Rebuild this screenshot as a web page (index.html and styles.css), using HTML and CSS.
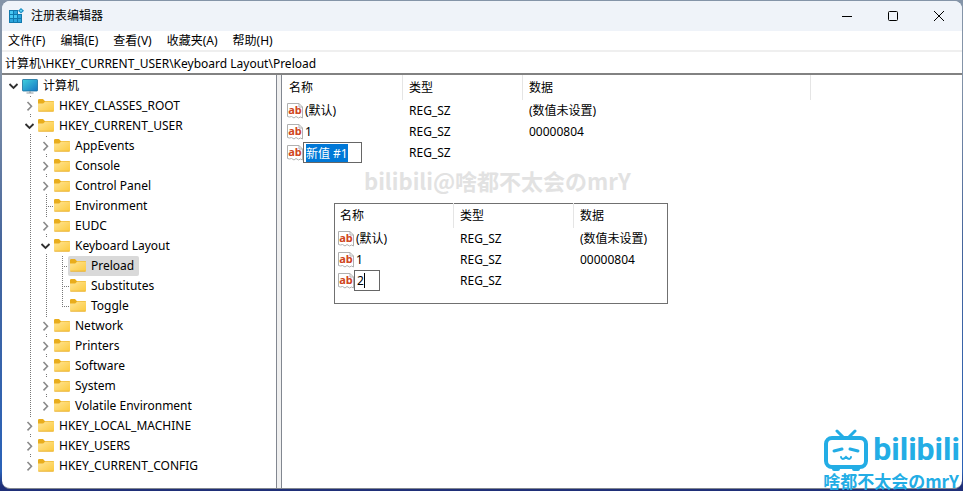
FILE: index.html
```html
<!DOCTYPE html>
<html lang="zh-CN">
<head>
    <meta charset="UTF-8">
    <meta name="viewport" content="width=device-width, initial-scale=1.0">
    <title>注册表编辑器</title>
    <link rel="stylesheet" href="styles.css">
</head>
<body>
    <!-- Shared icons -->
    <svg class="sprite" aria-hidden="true">
        <defs>
            <linearGradient id="folder-fill" x1="0" y1="0" x2="1" y2="1">
                <stop offset="0" stop-color="#ffe596"/>
                <stop offset="1" stop-color="#fcca3e"/>
            </linearGradient>
            <linearGradient id="screen-fill" x1="0" y1="0" x2="1" y2="1">
                <stop offset="0" stop-color="#3fd0dd"/>
                <stop offset="1" stop-color="#1676c4"/>
            </linearGradient>
        </defs>
        <symbol id="folder" viewBox="0 0 16 16">
            <path d="M0 2.2Q0 1 1.2 1H5l1.8 2H15q1 0 1 1v4H0z" fill="#e9ad1c"/>
            <path d="M0 5.4h5.2l2-2h8q.8 0 .8.8V12.500q0 1-1 1H1q-1 0-1-1z" fill="url(#folder-fill)"/>
            <path d="M.4 13.200h15.2" stroke="#e5aa2c" stroke-width=".8"/>
        </symbol>
        <symbol id="computer" viewBox="0 0 16 16">
            <rect x=".5" y="1.5" width="15" height="11.500" rx=".6" fill="url(#screen-fill)" stroke="#1a6f9c" stroke-width=".8"/>
            <path d="M8 13v2M4.5 15h7" stroke="#8f9ba3" stroke-width="1.2"/>
        </symbol>
        <symbol id="closed" viewBox="0 0 16 16">
            <path d="M6.500 4l4 4.200-4 4.200" fill="none" stroke="#8a8a8a" stroke-width="1.6"/>
        </symbol>
        <symbol id="open" viewBox="0 0 16 16">
            <path d="M4.500 6l4 4 4-4" fill="none" stroke="#303030" stroke-width="1.8"/>
        </symbol>
        <symbol id="string" viewBox="0 0 16 16">
            <path d="M.5 .5h11.500l3.500 3.500v11l-2-1-2 1-2.500-1.500-2 1.500-2.500-1.500-2 .5-2-.5z" fill="#fff" stroke="#b0b0b0"/>
            <path d="M12 .5V4h3.500" fill="none" stroke="#b0b0b0"/>
        </symbol>
    </svg>

    <div class="window">
        <header class="title-bar">
            <svg class="app-icon" viewBox="0 0 16 16">
                <rect x="1" y="2" width="13" height="13" fill="#1279ad"/>
                <path d="M2 3h3v3H2zM2 7h3v3H2zM6 7h3v3H6z" fill="#48c8f2"/>
                <path d="M6 3h3v3H6zM2 11h3v3H2zM6 11h3v3H6zM10 7h3v3h-3zM10 11h3v3h-3z" fill="#2ba4dc"/>
                <path d="M10 2h4v4h-4z" fill="#eff3f9"/>
                <path d="M13 0l3 2.700-3 2.700-3-2.700z" fill="#1c8fc4"/>
                <path d="M13 1.500l1.300 1.200L13 4l-1.300-1.300z" fill="#6fdcfa"/>
            </svg>
            <h1>注册表编辑器</h1>
            <div class="window-controls">
                <button aria-label="最小化"><svg viewBox="0 0 12 12"><path d="M1 6.500h10"/></svg></button>
                <button aria-label="最大化"><svg viewBox="0 0 12 12"><rect x="1.500" y="1.500" width="9" height="9" rx="1"/></svg></button>
                <button aria-label="关闭"><svg viewBox="0 0 12 12"><path d="M1 1l10 10M11 1L1 11"/></svg></button>
            </div>
        </header>

        <nav class="menu-bar">
            <button>文件(F)</button>
            <button>编辑(E)</button>
            <button>查看(V)</button>
            <button>收藏夹(A)</button>
            <button>帮助(H)</button>
        </nav>

        <input class="address-bar" type="text" aria-label="地址" value="计算机\HKEY_CURRENT_USER\Keyboard Layout\Preload">

        <main class="panes">
            <ul class="tree" id="tree">
                <li>
                    <div class="node"><svg class="toggle"><use href="#open"/></svg><span class="key"><svg class="icon"><use href="#computer"/></svg>计算机</span></div>
                    <ul>
                        <li><div class="node"><svg class="toggle"><use href="#closed"/></svg><span class="key"><svg class="icon"><use href="#folder"/></svg>HKEY_CLASSES_ROOT</span></div></li>
                        <li>
                            <div class="node"><svg class="toggle"><use href="#open"/></svg><span class="key"><svg class="icon"><use href="#folder"/></svg>HKEY_CURRENT_USER</span></div>
                            <ul>
                                <li><div class="node"><svg class="toggle"><use href="#closed"/></svg><span class="key"><svg class="icon"><use href="#folder"/></svg>AppEvents</span></div></li>
                                <li><div class="node"><svg class="toggle"><use href="#closed"/></svg><span class="key"><svg class="icon"><use href="#folder"/></svg>Console</span></div></li>
                                <li><div class="node"><svg class="toggle"><use href="#closed"/></svg><span class="key"><svg class="icon"><use href="#folder"/></svg>Control Panel</span></div></li>
                                <li><div class="node"><span class="branch"></span><span class="key"><svg class="icon"><use href="#folder"/></svg>Environment</span></div></li>
                                <li><div class="node"><svg class="toggle"><use href="#closed"/></svg><span class="key"><svg class="icon"><use href="#folder"/></svg>EUDC</span></div></li>
                                <li>
                                    <div class="node"><svg class="toggle"><use href="#open"/></svg><span class="key"><svg class="icon"><use href="#folder"/></svg>Keyboard Layout</span></div>
                                    <ul>
                                        <li><div class="node"><span class="branch"></span><span class="key selected"><svg class="icon"><use href="#folder"/></svg>Preload</span></div></li>
                                        <li><div class="node"><span class="branch"></span><span class="key"><svg class="icon"><use href="#folder"/></svg>Substitutes</span></div></li>
                                        <li><div class="node"><span class="branch"></span><span class="key"><svg class="icon"><use href="#folder"/></svg>Toggle</span></div></li>
                                    </ul>
                                </li>
                                <li><div class="node"><svg class="toggle"><use href="#closed"/></svg><span class="key"><svg class="icon"><use href="#folder"/></svg>Network</span></div></li>
                                <li><div class="node"><svg class="toggle"><use href="#closed"/></svg><span class="key"><svg class="icon"><use href="#folder"/></svg>Printers</span></div></li>
                                <li><div class="node"><svg class="toggle"><use href="#closed"/></svg><span class="key"><svg class="icon"><use href="#folder"/></svg>Software</span></div></li>
                                <li><div class="node"><svg class="toggle"><use href="#closed"/></svg><span class="key"><svg class="icon"><use href="#folder"/></svg>System</span></div></li>
                                <li><div class="node"><svg class="toggle"><use href="#closed"/></svg><span class="key"><svg class="icon"><use href="#folder"/></svg>Volatile Environment</span></div></li>
                            </ul>
                        </li>
                        <li><div class="node"><svg class="toggle"><use href="#closed"/></svg><span class="key"><svg class="icon"><use href="#folder"/></svg>HKEY_LOCAL_MACHINE</span></div></li>
                        <li><div class="node"><svg class="toggle"><use href="#closed"/></svg><span class="key"><svg class="icon"><use href="#folder"/></svg>HKEY_USERS</span></div></li>
                        <li><div class="node"><svg class="toggle"><use href="#closed"/></svg><span class="key"><svg class="icon"><use href="#folder"/></svg>HKEY_CURRENT_CONFIG</span></div></li>
                    </ul>
                </li>
            </ul>

            <section class="values">
                <table class="value-list">
                    <thead>
                        <tr><th class="col-name">名称</th><th class="col-type">类型</th><th class="col-data">数据</th></tr>
                    </thead>
                    <tbody>
                        <tr><td><div class="name"><span class="string-icon"><svg class="icon"><use href="#string"/></svg><b>ab</b></span><span>(默认)</span></div></td><td>REG_SZ</td><td>(数值未设置)</td></tr>
                        <tr><td><div class="name"><span class="string-icon"><svg class="icon"><use href="#string"/></svg><b>ab</b></span><span>1</span></div></td><td>REG_SZ</td><td>00000804</td></tr>
                        <tr><td><div class="name"><span class="string-icon"><svg class="icon"><use href="#string"/></svg><b>ab</b></span><input class="rename" id="new-value" type="text" aria-label="名称" value="新值 #1"></div></td><td>REG_SZ</td><td></td></tr>
                    </tbody>
                </table>

                <p class="watermark">bilibili@啥都不太会のmrY</p>

                <div class="inset">
                    <table class="value-list">
                        <thead>
                            <tr><th class="col-name">名称</th><th class="col-type">类型</th><th>数据</th></tr>
                        </thead>
                        <tbody>
                            <tr><td><div class="name"><span class="string-icon"><svg class="icon"><use href="#string"/></svg><b>ab</b></span><span>(默认)</span></div></td><td>REG_SZ</td><td>(数值未设置)</td></tr>
                            <tr><td><div class="name"><span class="string-icon"><svg class="icon"><use href="#string"/></svg><b>ab</b></span><span>1</span></div></td><td>REG_SZ</td><td>00000804</td></tr>
                            <tr><td><div class="name"><span class="string-icon"><svg class="icon"><use href="#string"/></svg><b>ab</b></span><input class="rename short" type="text" aria-label="名称" value="2"><i class="caret"></i></div></td><td>REG_SZ</td><td></td></tr>
                        </tbody>
                    </table>
                </div>
            </section>
        </main>
    </div>

    <div class="brand">
        <div class="brand-logo">
            <svg class="tv" viewBox="0 0 46 43">
                <path d="M14 2l7 7M32 2l-7 7" stroke-width="3"/>
                <rect x="3" y="9" width="40" height="29" rx="6" stroke-width="4"/>
                <path d="M11 22l8-2M35 22l-8-2" stroke-width="3"/>
                <path d="M18 28q1 4 5 0 4 4 5 0" stroke-width="2"/>
                <path d="M11 40h4M31 40h4" stroke-width="4"/>
            </svg>
            <span class="wordmark">bilibili</span>
        </div>
        <span class="brand-name">啥都不太会のmrY</span>
    </div>

    <script src="script.js"></script>
</body>
</html>
```
FILE: styles.css
```css
* {
    box-sizing: border-box;
}

body {
    margin: 0;
    padding: 1px 1px 2px 2px;
    height: 100vh;
    position: relative;
    background: linear-gradient(180deg, #8494a8 0, #8494a8 15%, #45659c 50%, #2a62b8 96%, #1f2f78 99%);
    font-family: "Noto Sans", "Noto Sans CJK SC", sans-serif;
    font-size: 12px;
    line-height: 20px;
    color: #000;
}

button, input {
    font: inherit;
    color: inherit;
}

button {
    border: none;
    background: none;
    padding: 0;
}

.sprite {
    position: absolute;
    width: 0;
    height: 0;
}

.window {
    display: flex;
    flex-direction: column;
    height: 100%;
    background: #fff;
    border-bottom: 1px solid #828790;
    border-radius: 8px;
    overflow: hidden;
}

/* Title bar */
.title-bar {
    display: flex;
    align-items: center;
    height: 30px;
    flex: none;
    padding-left: 6px;
    background: #eff3f9;
}

.title-bar h1 {
    margin: 0 auto 0 7px;
    font-size: 12px;
    font-weight: normal;
}

.app-icon {
    width: 16px;
    height: 16px;
}

.window-controls {
    display: flex;
}

.window-controls button {
    display: flex;
    align-items: center;
    justify-content: center;
    width: 46px;
    height: 30px;
}

.window-controls svg {
    width: 12px;
    height: 12px;
    fill: none;
    stroke: #000;
}

/* Menu and address */
.menu-bar {
    display: flex;
    gap: 15px;
    padding: 0 6px;
    height: 19px;
    flex: none;
    line-height: 19px;
}

.address-bar {
    height: 25px;
    flex: none;
    padding: 0 3px;
    border: none;
    border-top: 2px solid #efefef;
    border-bottom: 2px solid #828282;
    outline: none;
}

/* Panes */
.panes {
    display: flex;
    flex: 1;
    min-height: 0;
}

.tree {
    flex: 0 0 275px;
    padding: 1px 3px;
    border-right: 1px solid #828790;
}

.tree, .tree ul {
    margin: 0;
    list-style: none;
}

.tree ul {
    margin-left: 16px;
    padding: 0;
    background: repeating-linear-gradient(#777 0 1px, transparent 1px 2px) 9px 0 / 1px calc(100% - 10px) no-repeat;
}

.node {
    display: flex;
    align-items: center;
    height: 20px;
}

.toggle {
    width: 16px;
    height: 16px;
    background: #fff;
}

.branch {
    width: 16px;
    height: 1px;
    background: repeating-linear-gradient(90deg, #777 0 1px, transparent 1px 2px) 9px 0 no-repeat;
}

.key {
    display: flex;
    align-items: center;
    gap: 5px;
    height: 20px;
    margin-left: -1px;
    padding: 0 5px 0 2px;
    white-space: nowrap;
}

.key.selected {
    background: #d9d9d9;
    border-radius: 2px;
}

.icon {
    width: 16px;
    height: 16px;
    flex: none;
}

.values {
    flex: 1;
    margin-left: 4px;
    padding-left: 1px;
    border-left: 1px solid #828790;
    box-shadow: -4px 0 #f0f0f0;
    position: relative;
}

.value-list {
    border-collapse: separate;
    border-spacing: 0;
    table-layout: fixed;
}

.value-list th {
    height: 25px;
    padding: 0 6px;
    border-right: 1px solid #e5e5e5;
    font-weight: normal;
    text-align: left;
}

.value-list td {
    height: 21px;
    padding: 0 6px;
}

.col-name, .col-type {
    width: 120px;
}

.col-data {
    width: 288px;
}

.value-list td:first-child {
    padding: 0 4px;
}

.name {
    display: flex;
    align-items: center;
    gap: 2px;
    height: 21px;
    position: relative;
}

.string-icon {
    display: grid;
    place-items: center;
    width: 16px;
    height: 16px;
}

.string-icon > * {
    grid-area: 1 / 1;
}

.string-icon b {
    font-size: 11px;
    line-height: 14px;
    padding-bottom: 2px;
    color: #cf4520;
}

.rename {
    width: 59px;
    height: 21px;
    margin-left: -2px;
    padding: 0 2px;
    border: 1px solid #666;
    background: #fff;
    outline: none;
}

.rename::selection {
    background: #0078d7;
    color: #fff;
}

.rename.short {
    width: 26px;
}

.caret {
    position: absolute;
    left: 26px;
    width: 1px;
    height: 15px;
    background: #000;
}

.watermark {
    position: absolute;
    left: 82px;
    top: 88px;
    margin: 0;
    font-family: "Noto Sans CJK SC", sans-serif;
    font-size: 22px;
    font-weight: bold;
    line-height: 34px;
    color: #e2e2e2;
    white-space: nowrap;
}

/* Second value list, lies over the first one */
.inset {
    position: absolute;
    left: 52px;
    top: 128px;
    width: 334px;
    height: 101px;
    border: 1px solid #707070;
    background: #fff;
}

.inset .value-list {
    margin: -1px 0 0 -1px;
    width: 100%;
}

.inset th:last-child {
    border-right: none;
}

/* Channel mark in the corner */
.brand {
    position: absolute;
    right: 3px;
    bottom: 0;
    color: #23ade5;
    font-family: "Noto Sans CJK SC", sans-serif;
}

.brand-logo {
    display: flex;
    align-items: flex-start;
    gap: 4px;
    height: 43px;
}

.tv {
    width: 46px;
    height: 43px;
    fill: none;
    stroke: #23ade5;
    stroke-linecap: round;
}

.wordmark {
    font-family: Roboto, sans-serif;
    font-size: 32px;
    font-weight: bold;
    line-height: 40px;
}

.brand-name {
    display: block;
    font-size: 17px;
    font-weight: bold;
    line-height: 18px;
    height: 19px;
}
```
FILE: script.js
```js
// start in rename mode with the whole name selected
const newValue = document.getElementById('new-value');
newValue.focus();
newValue.select();
```
